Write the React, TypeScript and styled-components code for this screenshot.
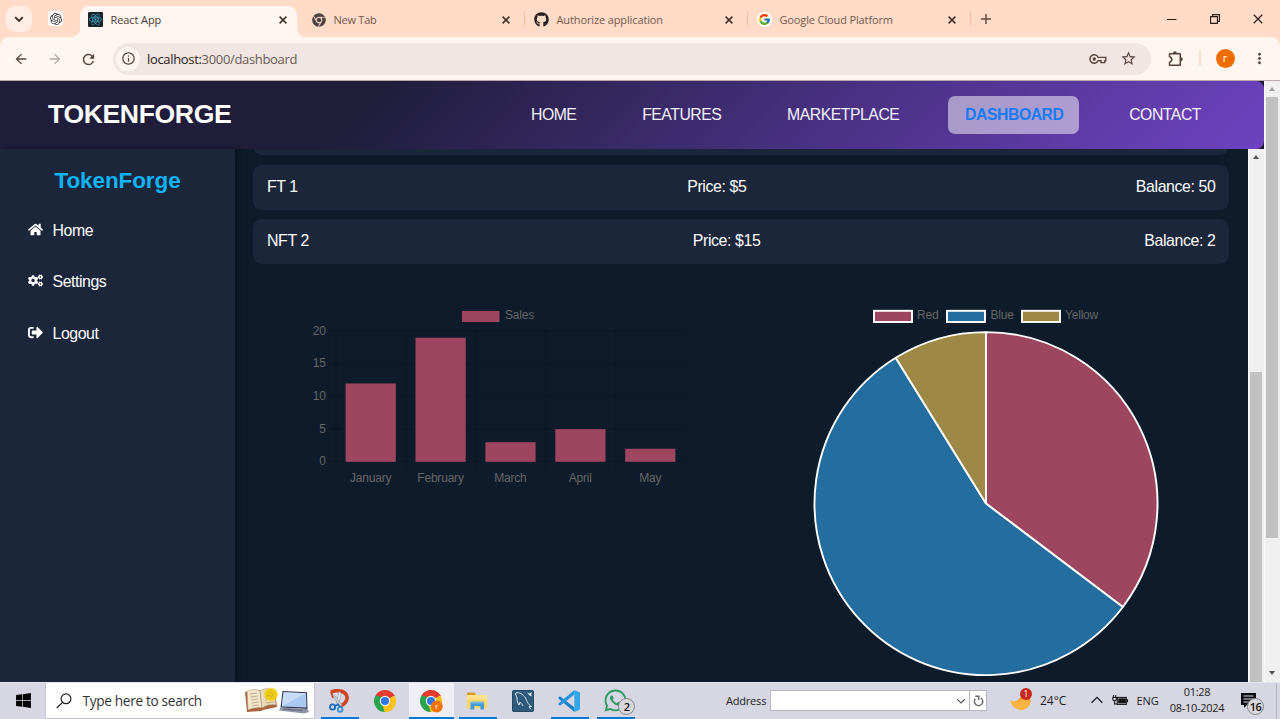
import React from 'react';
import styled, { createGlobalStyle } from 'styled-components';
import { FaHome, FaCogs, FaSignOutAlt, FaGithub, FaWindows, FaWhatsapp, FaChrome } from 'react-icons/fa';
import { SiOpenai, SiReact } from 'react-icons/si';
import { FcGoogle } from 'react-icons/fc';
import { MdArrowBack, MdArrowForward, MdRefresh, MdInfoOutline, MdStarOutline, MdMoreVert } from 'react-icons/md';

const Global = createGlobalStyle`
  html, body { margin: 0; padding: 0; overflow: hidden; }
  * { box-sizing: border-box; }
  svg { display: block; flex-shrink: 0; }
`;

const ui = `"Open Sans", "Noto Sans", sans-serif`;
const arial = `"Liberation Sans", Arial, sans-serif`;

const Screen = styled.div`
  width: 1280px;
  height: 719px;
  display: flex;
  flex-direction: column;
  overflow: hidden;
  font-family: ${ui};
  background: #ffdbc8;
`;

const Label = styled.span<{ $size: number; $ls?: number; $color?: string }>`
  font-size: ${p => p.$size}px;
  letter-spacing: ${p => p.$ls ?? 0}px;
  color: ${p => p.$color ?? 'inherit'};
  white-space: nowrap;
`;

/* ---------- Browser chrome ---------- */

const TabStrip = styled.div`
  height: 37px;
  display: flex;
  padding: 0 0 0 6px;
  color: #5d4439;
`;

const TabSearch = styled.div`
  width: 26px;
  height: 26px;
  margin-top: 6px;
  border-radius: 9px;
  background: #ffece2;
  display: grid;
  place-items: center;
  color: #3a2a23;
`;

const PinnedTab = styled.div`
  width: 15px;
  height: 15px;
  margin: 11px 17px 0 16px;
  border-radius: 3px;
  background: #fff;
  display: grid;
  place-items: center;
  color: #333;
`;

const Tab = styled.div<{ $active?: boolean }>`
  width: 217px;
  margin: 6px 6px 0 0;
  height: 31px;
  display: flex;
  align-items: center;
  padding: 0 10px 4px 8px;
  border-radius: 9px 9px 0 0;
  position: relative;
  background: ${p => (p.$active ? '#fff6f2' : 'transparent')};
  color: ${p => (p.$active ? '#4a3a34' : '#755a4d')};
  ${p => p.$active && `
    &::before, &::after {
      content: '';
      position: absolute;
      bottom: 0;
      width: 8px;
      height: 8px;
    }
    &::before { left: -8px; background: radial-gradient(circle at 0 0, transparent 7.5px, #fff6f2 8px); }
    &::after { right: -8px; background: radial-gradient(circle at 100% 0, transparent 7.5px, #fff6f2 8px); }
  `}
`;

const TabIcon = styled.div<{ $bg?: string; $round?: boolean }>`
  width: 15px;
  height: 15px;
  margin-right: 7.5px;
  display: grid;
  place-items: center;
  background: ${p => p.$bg ?? 'transparent'};
  border-radius: ${p => (p.$round ? '50%' : '1px')};
`;

const TabTitle = styled(Label)`
  flex: 1;
`;

const TabClose = styled.div`
  color: #3f2d26;
`;

const TabDivider = styled.div`
  position: absolute;
  right: -5px;
  top: 5px;
  width: 1.5px;
  height: 15px;
  background: #ffb992;
`;

const NewTab = styled.div`
  padding-top: 14px;
  margin-left: 9px;
  flex: 1;
`;

const WindowControls = styled.div`
  width: 130px;
  height: 37px;
  display: grid;
  grid-template-columns: repeat(3, 43px);
  place-items: center;
  color: #251a16;
`;

const Toolbar = styled.div`
  height: 44px;
  display: flex;
  align-items: center;
  background: #fff6f2;
  border-radius: 9px 9px 0 0;
  border-bottom: 1px solid #b9aaa9;
  color: #55433c;
`;

const NavButtons = styled.div`
  width: 113px;
  display: grid;
  grid-template-columns: repeat(3, 33.7px);
  padding: 1px 0 0 4px;
  justify-items: center;
`;

const Omnibox = styled.div`
  width: 1038px;
  height: 32px;
  border-radius: 16px;
  background: #f1e6e3;
  display: flex;
  align-items: center;
  padding: 0 14px 0 3px;
`;

const SiteInfo = styled.div`
  width: 24px;
  height: 24px;
  border-radius: 50%;
  background: #fff6f2;
  display: grid;
  place-items: center;
  margin-right: 7px;
`;

const Url = styled(Label)`
  flex: 1;
  b { font-weight: 400; color: #2b211d; }
`;

const OmniActions = styled.div`
  display: flex;
  align-items: center;
  gap: 13px;
`;

const ToolbarEnd = styled.div`
  flex: 1;
  display: flex;
  align-items: center;
  padding-left: 16px;
`;

const ToolbarDivider = styled.div`
  width: 1.5px;
  height: 15px;
  margin: 0 15px 0 14px;
  background: #ffdbc8;
`;

const Avatar = styled.div`
  width: 19px;
  height: 19px;
  border-radius: 50%;
  background: #ef6c00;
  color: #fff;
  font: 11px/17px ${ui};
  text-align: center;
  margin-right: 16px;
`;

/* ---------- Web page ---------- */

const Viewport = styled.div`
  height: 601px;
  display: flex;
  background: #0d1b2a;
`;

const PageArea = styled.div`
  width: 1264px;
  display: flex;
  flex-direction: column;
  background: #1b1833;
  font-family: ${arial};
  color: #fff;
`;

const Header = styled.header`
  height: 68px;
  display: flex;
  align-items: center;
  justify-content: space-between;
  padding: 0 47px 0 48px;
  border-radius: 0 8px 8px 0;
  background: linear-gradient(135deg, #1f1d3a 0%, #1f1d3a 29%, #46307f 63%, #6f42c1 100%);
`;

const Brand = styled.div`
  font-size: 26.6px;
  font-weight: 700;
  letter-spacing: -0.38px;
  padding-bottom: 1px;
`;

const Nav = styled.nav`
  display: flex;
  gap: 33px;
`;

const NavLink = styled.a<{ $active?: boolean }>`
  height: 38.5px;
  padding: 0 16px 0 16.7px;
  line-height: 38px;
  font-size: 15.8px;
  letter-spacing: -0.48px;
  border-radius: 7px;
  color: ${p => (p.$active ? '#137bf8' : '#f5f2fa')};
  font-weight: ${p => (p.$active ? 700 : 400)};
  background: ${p => (p.$active ? 'rgba(255, 255, 255, 0.5)' : 'transparent')};
`;

const Body = styled.div`
  height: 533px;
  display: flex;
  background: #0d1b2a;
`;

const Sidebar = styled.aside`
  width: 235px;
  background: #1b263b;
  box-shadow: 2px 0 5px rgba(0, 0, 0, 0.4);
  display: flex;
  flex-direction: column;
  padding-top: 18px;
`;

const SideTitle = styled.div`
  font-size: 22.5px;
  line-height: 28px;
  font-weight: 700;
  letter-spacing: -0.1px;
  text-align: center;
  color: #0db4f5;
  margin-bottom: 10.2px;
`;

const SideItem = styled.a`
  height: 51.5px;
  display: flex;
  align-items: center;
  padding-left: 28px;
  gap: 9.5px;
  font-size: 15.9px;
  letter-spacing: -0.45px;
  svg { margin-top: -3px; }
`;

const Main = styled.main`
  width: 1013px;
  padding: 0 19px 0 18px;
  overflow: hidden;
`;

const AssetList = styled.div`
  display: flex;
  flex-direction: column;
  gap: 9.4px;
  margin-top: -38.4px;
`;

const AssetRow = styled.div`
  height: 44.8px;
  border-radius: 9px;
  background: #1b263b;
  display: flex;
  align-items: center;
  justify-content: space-between;
  padding: 0 13.6px 0 14px;
  font-size: 15.9px;
  letter-spacing: -0.4px;
`;

const Charts = styled.div`
  display: flex;
  padding: 36px 0 0 42px;
  gap: 105px;
`;

const ScrollTrack = styled.div`
  width: 16px;
  background: #f1f0f0;
  border-left: 1px solid #f9f9f9;
  display: flex;
  flex-direction: column;
  align-items: center;
  padding-right: 1px;
`;

const ScrollArrow = styled.div<{ $down?: boolean; $faded?: boolean }>`
  width: 0;
  height: 0;
  border: 3.5px solid transparent;
  border-top-width: ${p => (p.$down ? 4 : 0)}px;
  border-bottom-width: ${p => (p.$down ? 0 : 4)}px;
  border-top-color: ${p => (p.$down ? '#505050' : 'transparent')};
  border-bottom-color: ${p => (p.$down ? 'transparent' : p.$faded ? '#a3a3a3' : '#505050')};
  margin: ${p => (p.$down ? '0 0 7px' : '6px 0 6px')};
`;

const ScrollThumb = styled.div<{ $h: number; $gap?: number }>`
  width: 12px;
  height: ${p => p.$h}px;
  margin-top: ${p => p.$gap ?? 0}px;
  background: #c1c1c1;
`;

const Spacer = styled.div`
  flex: 1;
`;

/* ---------- Taskbar ---------- */

const Taskbar = styled.footer`
  height: 37px;
  display: flex;
  align-items: center;
  background: #d7d6e3;
  border-top: 1px solid #e6e5ee;
  color: #1c1c22;
`;

const StartButton = styled.div`
  width: 45px;
  padding: 0 0 1px 14.5px;
  color: #000;
`;

const SearchBox = styled.div`
  width: 270px;
  height: 36px;
  background: #fff;
  border: 1px solid #c7c6ce;
  border-top: 0;
  display: flex;
  align-items: center;
  padding: 0 4px 0 10px;
  color: #333;
`;

const SearchText = styled(Label)`
  margin-left: 10.5px;
  flex: 1;
`;

const Apps = styled.div`
  display: flex;
  height: 36px;
  padding-left: 2px;
  width: 393px;
`;

const AppButton = styled.div<{ $open?: boolean; $active?: boolean }>`
  width: 46px;
  height: 36px;
  position: relative;
  display: grid;
  place-items: center;
  padding: 0 1.5px 1px 0;
  &::before {
    content: '';
    display: ${p => (p.$active ? 'block' : 'none')};
    position: absolute;
    inset: 0 1px 0 0;
    background: #efeef5;
  }
  &::after {
    content: '';
    display: ${p => (p.$open || p.$active ? 'block' : 'none')};
    position: absolute;
    bottom: 0;
    left: ${p => (p.$active ? 0 : 4)}px;
    width: ${p => (p.$active ? 45 : 38)}px;
    height: 2px;
    background: #0878d2;
  }
  > svg { position: relative; }
`;

const Badge = styled.span<{ $x: number; $y: number }>`
  position: absolute;
  left: ${p => p.$x}px;
  top: ${p => p.$y}px;
  width: 17px;
  height: 17px;
  border-radius: 50%;
  border: 1px solid #85858a;
  background: #d9d8dc;
  color: #111;
  font: 600 11px/15px ${ui};
  letter-spacing: -0.6px;
  text-align: center;
`;

const Address = styled.div`
  display: flex;
  align-items: center;
  padding: 0 0 2px 18px;
  width: 280px;
`;

const AddressLabel = styled(Label)`
  width: 44px;
`;

const AddressInput = styled.div`
  width: 200px;
  height: 21px;
  margin-top: 1px;
  background: #fff;
  border: 1px solid #b7b6bf;
  display: flex;
  align-items: center;
  justify-content: flex-end;
  padding-right: 3px;
  color: #555;
`;

const AddressGo = styled.div`
  width: 17px;
  height: 21px;
  margin-top: 1px;
  background: #fff;
  border: 1px solid #b7b6bf;
  border-left: 0;
  display: grid;
  place-items: center;
`;

const TrayCell = styled.div<{ $w: number }>`
  width: ${p => p.$w}px;
  position: relative;
  display: flex;
  align-items: center;
  padding-bottom: 2px;
`;

const WeatherBadge = styled.span`
  position: absolute;
  left: 10px;
  top: -2px;
  width: 12px;
  height: 12px;
  border-radius: 50%;
  background: #c8281e;
  color: #fff;
  font: 8.5px/11px ${ui};
  text-align: center;
`;

const Clock = styled.div`
  width: 60px;
  display: flex;
  flex-direction: column;
  align-items: center;
  line-height: 16.5px;
  margin-top: -2px;
`;

const ShowDesktop = styled.div`
  height: 36px;
  width: 4px;
  border-left: 1px solid #b5b4c0;
`;

/* ---------- Icons ---------- */

const Cross = ({ size = 8, w = 1.5 }: { size?: number; w?: number }) => (
  <svg width={size} height={size} viewBox="0 0 8 8" stroke="currentColor" strokeWidth={w} fill="none">
    <path d="M.6.6l6.8 6.8M7.4.6L.6 7.4" />
  </svg>
);

const Chevron = ({ up, size = 10, w = 1.2 }: { up?: boolean; size?: number; w?: number }) => (
  <svg width={size} height={size} viewBox="0 0 10 10" fill="none" stroke="currentColor" strokeWidth={w}>
    <path d={up ? 'M.5 7.3L5 2.8l4.5 4.5' : 'M1.2 3.2L5 7l3.8-3.8'} />
  </svg>
);

const KeyIcon = () => (
  <svg width="18" height="12" viewBox="0 0 18 12" fill="none" stroke="currentColor" strokeWidth="1.4">
    <path d="M9.2 4.400A4.300 4.300 0 1 0 9.200 7.600H12V9.600H15.800V7.600H16.800V4.400Z" />
    <circle cx="5.300" cy="6" r="1.700" fill="currentColor" stroke="none" />
  </svg>
);

const PuzzleIcon = () => (
  <svg width="18" height="18" viewBox="0 0 18 18" fill="none" stroke="currentColor" strokeWidth="1.500" strokeLinejoin="round">
    <path d="M2.500 3.700H13.300V15.200H2.500V12.200C5.600 11.600 5.600 7.400 2.500 6.800Z" />
    <path d="M6.200 3.300a1.700 1.700 0 0 1 3.400 0ZM13.800 7.500a1.700 1.700 0 0 1 0 3.400Z" fill="currentColor" strokeWidth=".6" />
  </svg>
);

const ChromeLogo = ({ badge }: { badge?: boolean }) => (
  <svg width="24" height="24" viewBox="0 0 24 24">
    <path d="M12 12L2.47 6.5A11 11 0 0 1 21.53 6.5Z" fill="#e33b2e" />
    <path d="M12 12L21.53 6.5A11 11 0 0 1 12 23Z" fill="#fbc116" />
    <path d="M12 12L12 23A11 11 0 0 1 2.47 6.5Z" fill="#2ba24c" />
    <path d="M12 7H21.8V6.5H12Z" fill="#e33b2e" />
    <path d="M7.6 14.6L2.47 6.5L9 8Z" fill="#2ba24c" />
    <path d="M16.3 14.5L11.5 23L10 17Z" fill="#fbc116" />
    <circle cx="12" cy="12" r="5.2" fill="#fff" />
    <circle cx="12" cy="12" r="4.1" fill="#3277e8" />
    {badge && <circle cx="17.8" cy="17.5" r="5.9" fill="#f3730c" />}
    {badge && <text x="17.8" y="20.2" fontSize="8" fill="#fff" textAnchor="middle" fontFamily="Open Sans, sans-serif">r</text>}
  </svg>
);

const SnipIcon = () => (
  <svg width="22" height="24" viewBox="0 0 22 24" fill="none">
    <path d="M3 3C9 .5 18 1.500 19 8C19.600 12 16 16 12 17" stroke="#cf4423" strokeWidth="3.6" />
    <path d="M3 2.500L5 9" stroke="#cf4423" strokeWidth="2" />
    <path d="M11 2.500L13 4L10.500 17L8.500 15Z" fill="#f4f5f7" stroke="#8a9097" strokeWidth=".6" />
    <path d="M4.500 6L7 7L14 16L11.500 17.500Z" fill="#cfd4da" stroke="#8a9097" strokeWidth=".6" />
    <circle cx="4.600" cy="18" r="2.600" stroke="#1d6fbd" strokeWidth="1.900" />
    <circle cx="12.200" cy="20.400" r="2.300" stroke="#3a94dc" strokeWidth="1.900" />
    <path d="M7 17L10 15.500L12 18" stroke="#1d6fbd" strokeWidth="1.800" />
  </svg>
);

const FolderIcon = () => (
  <svg width="22" height="20" viewBox="0 0 22 20">
    <path d="M1 1.500h7.500l1.500 2.500H1z" fill="#d99a1a" />
    <path d="M1 4h20v13.500H1z" fill="#fbd869" />
    <path d="M1 4h20v4H1z" fill="#fde28d" />
    <path d="M4.500 10.800h13.500V18.500h-3.700v-3.600h-6v3.600H4.500z" fill="#4598d8" />
    <path d="M4.500 10.800h13.500v1.700H4.500z" fill="#76bbeb" />
  </svg>
);

const MysqlIcon = () => (
  <svg width="24" height="24" viewBox="0 0 24 24" fill="none">
    <rect x="1" y="1" width="22" height="22" rx="2" fill="#2f5a7c" />
    <rect x="1.500" y="1.500" width="21" height="21" rx="2" stroke="#234966" />
    <path d="M5 4C8 3 12 5 14.500 9C16 12 16.500 15 20.500 17.500L18 17.700L20 20.500M5 4C3.500 5 6 7 6 9C6 12 6.500 14 8 16L9 13C10 14.500 11 15 12 17" stroke="#d6e4ee" strokeWidth="1" />
    <path d="M16 3.500L18.500 4.500L21 3L20 6L21.500 7.500L18.500 6.500Z" fill="#e6eef4" />
  </svg>
);

const VsCodeIcon = () => (
  <svg width="24" height="24" viewBox="0 0 24 24">
    <path d="M1.200 8.700L3 7.200L17.500 18.500V23L2 10Z" fill="#1a80c6" />
    <path d="M1.200 15.300L3 16.800L17.500 5.500V1L2 14Z" fill="#2494da" />
    <path d="M17.300 1L23 3.500V20.500L17.300 23Z" fill="#34a6ea" />
  </svg>
);

const BookLaptop = () => (
  <svg width="66" height="28" viewBox="0 0 66 28">
    <path d="M1 5L15 3L17 4L31 5L33 20L19 23L17 24L3 25Z" fill="#a9653f" />
    <path d="M3 4C8 2 13 2 16 4L18 21C14 20 9 21 4 23Z" fill="#f3e6cb" stroke="#a08a6c" strokeWidth=".5" />
    <path d="M16 4C20 1 25 1 30 3L32 18C27 17 22 18 18 21Z" fill="#eadbbc" stroke="#a08a6c" strokeWidth=".5" />
    <path d="M6 7l7-1M6.500 10l7-1M7 13l7-1M7.400 16l7-1M7.800 19l7-1M20 7l6-1M20.500 10l7-1M21 13l8-1M21.500 16l8-1" stroke="#a89475" strokeWidth=".7" />
    <circle cx="27" cy="7.500" r="6.300" fill="#efcb18" stroke="#f3d849" strokeWidth="1.500" strokeDasharray="1.5 1" />
    <path d="M25 5l4 2-2 4M23 9l3-1" stroke="#cfa60c" strokeWidth=".7" fill="none" />
    <path d="M38.500 4L63 5.300L63.500 22L36.500 20.500Z" fill="#34394a" />
    <path d="M39.500 5.200L62 6.300L62.500 20.500L37.800 19.500Z" fill="#a9c8f2" />
    <path d="M39.500 5.200L62 6.300L37.800 19.500Z" fill="#c9dcf7" />
    <path d="M36.500 20.500L63.500 22L65 25L60 26.500L35 23.500Z" fill="#8e94a6" />
    <path d="M39 22l20 1.500" stroke="#5e6478" />
  </svg>
);

const MoonIcon = () => (
  <svg width="22" height="20" viewBox="0 0 22 20">
    <path d="M.5 10.500C4 13 10 11 12.500 3C18 4 21.500 8 20.500 12C19 18.500 13 21 7.500 19C3.500 17.500 1 14 .5 10.500Z" fill="#f59b2b" />
    <path d="M.5 10.500C4 13 10 12 14 8C17 10 19 11 20.500 12C19 18.500 13 21 7.500 19C3.500 17.500 1 14 .5 10.500Z" fill="#fbb441" />
  </svg>
);

const BatteryIcon = () => (
  <svg width="17" height="11" viewBox="0 0 17 11" fill="none" stroke="#111">
    <path d="M.8 2.500h3.600v1.600a1.800 1.800 0 0 1-3.600 0zM2.600 6v3h2.600M1.500 0v2.500M3.700 0v2.500" strokeWidth="1.100" />
    <rect x="5.300" y="2.400" width="9" height="7" strokeWidth="1" />
    <rect x="6.800" y="3.900" width="6.500" height="4" fill="#111" />
    <path d="M15.400 4.300v3" strokeWidth="1.300" />
  </svg>
);

/* ---------- Charts ---------- */

const sales = [
  { month: 'January', value: 12 },
  { month: 'February', value: 19 },
  { month: 'March', value: 3 },
  { month: 'April', value: 5 },
  { month: 'May', value: 2 },
];

const ChartText = styled.text`
  font-family: ${arial};
  font-size: 12px;
  letter-spacing: -0.2px;
  fill: #666;
`;

const BarChart = () => {
  const y = (v: number) => 461.5 - v * 6.53;
  return (
    <svg width="400" height="200" viewBox="295 300 400 200">
      <rect x="462" y="311" width="37.500" height="11" fill="#9e465f" />
      <ChartText x="505" y="319">Sales</ChartText>
      {[0, 5, 10, 15, 20].map(t => (
        <g key={t}>
          <path d={`M328 ${y(t)}H685.500`} stroke="#000" strokeOpacity=".1" />
          <ChartText x="325.800" y={Math.round(y(t) + 3.7)} textAnchor="end">{t}</ChartText>
        </g>
      ))}
      {[0, 1, 2, 3, 4, 5].map(i => (
        <path key={i} d={`M${336 + i * 69.9} 331V470`} stroke="#000" strokeOpacity={i === 5 ? '.04' : '.1'} />
      ))}
      {sales.map((s, i) => (
        <g key={s.month}>
          <rect x={345.6 + i * 69.9} y={y(s.value) + 0.3} width="50.200" height={s.value * 6.53} fill="#9e465f" />
          <ChartText x={370.600 + i * 69.9} y="482" textAnchor="middle">{s.month}</ChartText>
        </g>
      ))}
    </svg>
  );
};

const slices = [
  { name: 'Red', value: 12, color: '#9e465f', x: 874, tx: 917 },
  { name: 'Blue', value: 19, color: '#246d9f', x: 947, tx: 990.5 },
  { name: 'Yellow', value: 3, color: '#9d8845', x: 1022, tx: 1065 },
];

const PieChart = () => {
  const cx = 986, cy = 503.600, r = 171.500;
  let sum = 0;
  const point = (v: number) => {
    const a = (v / 34) * Math.PI * 2;
    return `${cx + r * Math.sin(a)} ${cy - r * Math.cos(a)}`;
  };
  return (
    <svg width="380" height="382" viewBox="800 300 380 382">
      {slices.map(s => {
        const from = sum;
        sum += s.value;
        return (
          <g key={s.name}>
            <rect x={s.x} y="310.800" width="38" height="11.200" fill={s.color} stroke="#fff" strokeWidth="1.900" />
            <ChartText x={s.tx} y="319">{s.name}</ChartText>
            <path
              d={`M${cx} ${cy}L${point(from)}A${r} ${r} 0 ${s.value > 17 ? 1 : 0} 1 ${point(sum)}Z`}
              fill={s.color}
              stroke="#fff"
              strokeWidth="1.900"
              strokeLinejoin="bevel"
            />
          </g>
        );
      })}
    </svg>
  );
};

const tabs = [
  { title: 'React App', active: true, bg: '#1c2229', icon: <SiReact size={13} color="#3fa6c4" />, ls: -0.1 },
  { title: 'New Tab', icon: <FaChrome size={14} color="#4b4443" />, ls: -0.25 },
  { title: 'Authorize application', icon: <FaGithub size={15} color="#24201f" />, ls: -0.12 },
  { title: 'Google Cloud Platform', bg: '#fff', round: true, icon: <FcGoogle size={13} />, ls: -0.13 },
];

const assets = [
  { name: '', price: '', balance: '' },
  { name: 'FT 1', price: 'Price: $5', balance: 'Balance: 50' },
  { name: 'NFT 2', price: 'Price: $15', balance: 'Balance: 2' },
];

export default function App() {
  return (
    <Screen>
      <Global />
      <TabStrip>
        <TabSearch><Chevron w={1.8} /></TabSearch>
        <PinnedTab><SiOpenai size={12} /></PinnedTab>
        {tabs.map(t => (
          <Tab key={t.title} $active={t.active}>
            <TabIcon $bg={t.bg} $round={t.round}>{t.icon}</TabIcon>
            <TabTitle $size={11} $ls={t.ls}>{t.title}</TabTitle>
            <TabClose><Cross /></TabClose>
            {!t.active && <TabDivider />}
          </Tab>
        ))}
        <NewTab>
          <svg width="10" height="10" viewBox="0 0 10 10" stroke="currentColor" strokeWidth="1.400"><path d="M5 0v10M0 5h10" /></svg>
        </NewTab>
        <WindowControls>
          <svg width="10" height="10" viewBox="0 0 10 10" stroke="currentColor"><path d="M0 5.500h9.500" /></svg>
          <svg width="10" height="10" viewBox="0 0 10 10" fill="none" stroke="currentColor" strokeWidth="1.100"><path d="M.6 2.600h6.800v6.800H.6zM2.600 2.600V.6h6.800v6.800H7.400" /></svg>
          <Cross size={10} w={0.9} />
        </WindowControls>
      </TabStrip>
      <Toolbar>
        <NavButtons>
          <MdArrowBack size={16} />
          <MdArrowForward size={16} color="#b3a8a3" />
          <MdRefresh size={17} />
        </NavButtons>
        <Omnibox>
          <SiteInfo><MdInfoOutline size={15} /></SiteInfo>
          <Url $size={13} $ls={-0.33} $color="#6a5a54"><b>localhost:</b>3000/dashboard</Url>
          <OmniActions>
            <KeyIcon />
            <MdStarOutline size={17} />
          </OmniActions>
        </Omnibox>
        <ToolbarEnd>
          <PuzzleIcon />
          <ToolbarDivider />
          <Avatar>r</Avatar>
          <MdMoreVert size={17} />
        </ToolbarEnd>
      </Toolbar>

      <Viewport>
        <PageArea>
          <Header>
            <Brand>TOKENFORGE</Brand>
            <Nav>
              <NavLink>HOME</NavLink>
              <NavLink>FEATURES</NavLink>
              <NavLink>MARKETPLACE</NavLink>
              <NavLink $active>DASHBOARD</NavLink>
              <NavLink>CONTACT</NavLink>
            </Nav>
          </Header>
          <Body>
            <Sidebar>
              <SideTitle>TokenForge</SideTitle>
              <SideItem><FaHome size={15} />Home</SideItem>
              <SideItem><FaCogs size={15} />Settings</SideItem>
              <SideItem><FaSignOutAlt size={15} />Logout</SideItem>
            </Sidebar>
            <Main>
              <AssetList>
                {assets.map((a, i) => (
                  <AssetRow key={i}>
                    <span>{a.name}</span>
                    <span>{a.price}</span>
                    <span>{a.balance}</span>
                  </AssetRow>
                ))}
              </AssetList>
              <Charts>
                <BarChart />
                <PieChart />
              </Charts>
            </Main>
            <ScrollTrack>
              <ScrollArrow />
              <ScrollThumb $h={310} $gap={207} />
            </ScrollTrack>
          </Body>
        </PageArea>
        <ScrollTrack>
          <ScrollArrow $faded />
          <ScrollThumb $h={441} />
          <Spacer />
          <ScrollArrow $down />
        </ScrollTrack>
      </Viewport>

      <Taskbar>
        <StartButton><FaWindows size={17} /></StartButton>
        <SearchBox>
          <svg width="16" height="16" viewBox="0 0 16 16" fill="none" stroke="#222" strokeWidth="1.200"><circle cx="10" cy="5.800" r="4.900" /><path d="M6.500 9.300L.8 15" /></svg>
          <SearchText $size={13.6} $ls={-0.3}>Type here to search</SearchText>
          <BookLaptop />
        </SearchBox>
        <Apps>
          <AppButton $open><SnipIcon /></AppButton>
          <AppButton><ChromeLogo /></AppButton>
          <AppButton $active><ChromeLogo badge /></AppButton>
          <AppButton $open><FolderIcon /></AppButton>
          <AppButton><MysqlIcon /></AppButton>
          <AppButton $open><VsCodeIcon /></AppButton>
          <AppButton $open><FaWhatsapp size={25} color="#2b9b62" /><Badge $x={25} $y={15}>2</Badge></AppButton>
        </Apps>
        <Address>
          <AddressLabel $size={11} $ls={-0.2}>Address</AddressLabel>
          <AddressInput><Chevron size={10} /></AddressInput>
          <AddressGo>
            <svg width="11" height="12" viewBox="0 0 11 12" fill="none" stroke="#666" strokeWidth="1.400"><path d="M8 3A4.200 4.200 0 1 1 2.300 3.800M2.200 1.200h3.600v3.800" /></svg>
          </AddressGo>
        </Address>
        <Spacer />
        <TrayCell $w={30}>
          <MoonIcon />
          <WeatherBadge>1</WeatherBadge>
        </TrayCell>
        <TrayCell $w={51}><Label $size={12}>24°C</Label></TrayCell>
        <TrayCell $w={20.5}><Chevron up size={12} w={1.1} /></TrayCell>
        <TrayCell $w={25}><BatteryIcon /></TrayCell>
        <TrayCell $w={30.5}><Label $size={11} $ls={-0.1}>ENG</Label></TrayCell>
        <Clock>
          <Label $size={11} $ls={-0.3}>01:28</Label>
          <Label $size={11} $ls={-0.3}>08-10-2024</Label>
        </Clock>
        <TrayCell $w={49}>
          <svg width="34" height="17" viewBox="0 0 34 17"><path d="M14 1h15v12H20l-3 3v-3h-3z" fill="#0c0c0f" /><path d="M16.500 4h10M16.500 7h10M16.500 10h6" stroke="#d7d6e3" strokeWidth="1.100" /></svg>
          <Badge $x={20} $y={6}>16</Badge>
        </TrayCell>
        <ShowDesktop />
      </Taskbar>
    </Screen>
  );
}
